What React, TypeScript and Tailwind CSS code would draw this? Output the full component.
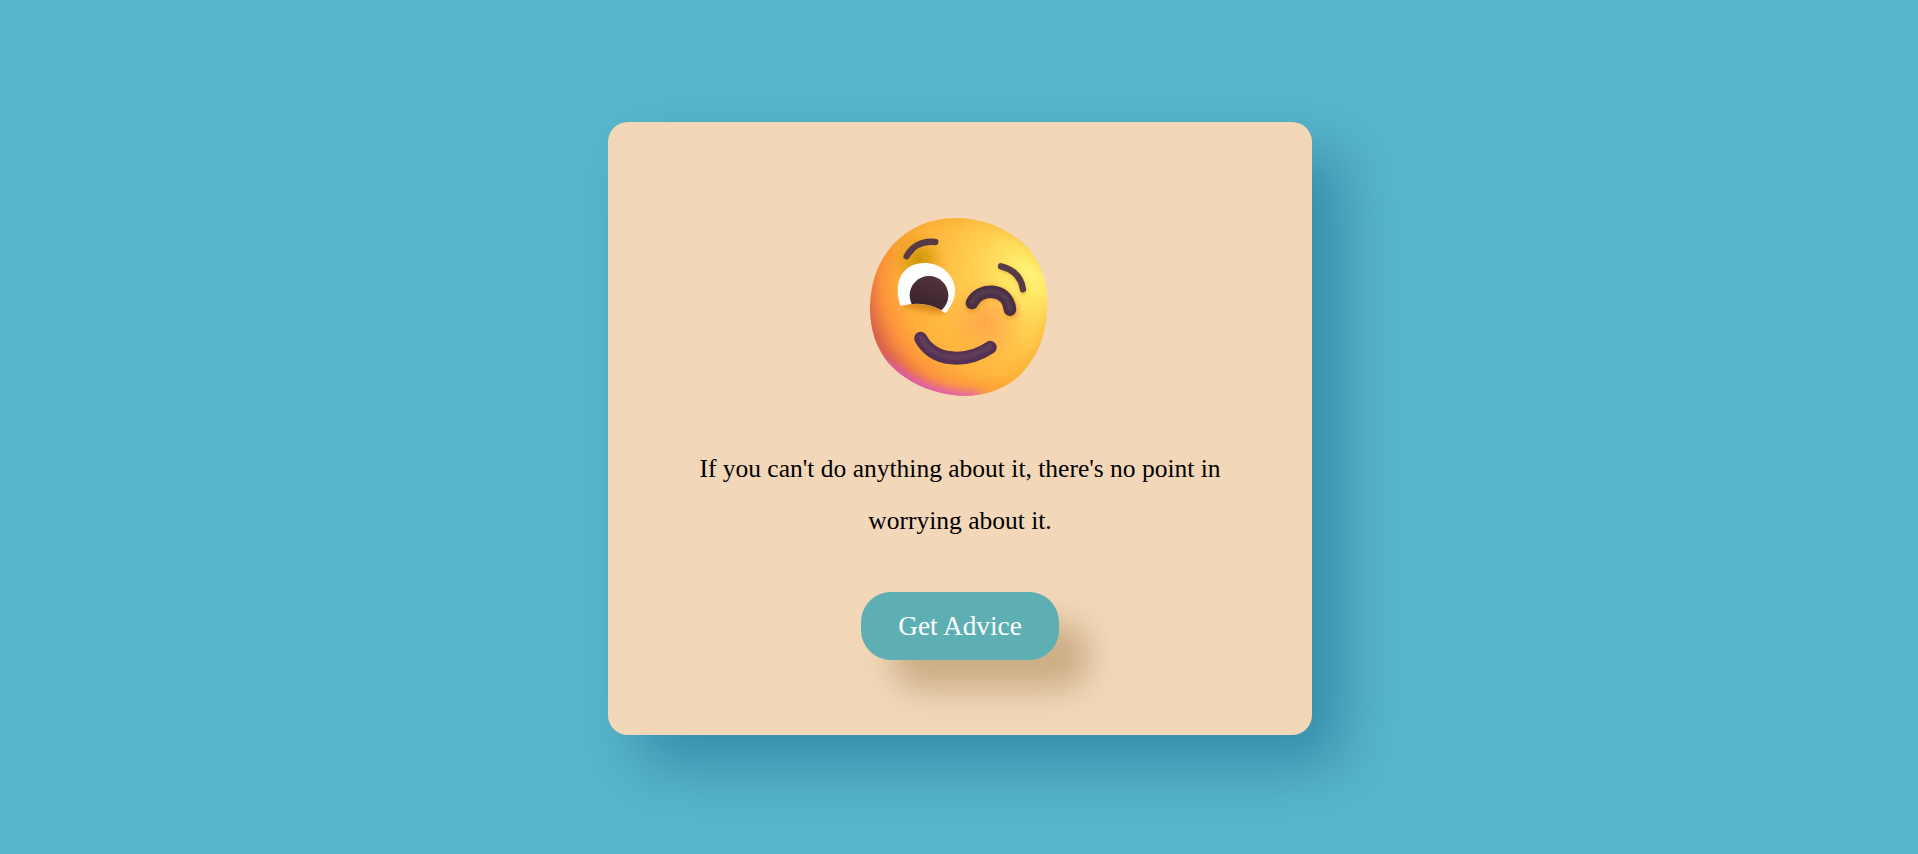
function WinkFace() {
  return (
    <svg viewBox="0 0 660 630" className="block h-[210px] w-[220px]" role="img">
      <defs>
        <clipPath id="head">
          <path d="M315 54C400 54 480 88 530 140C573 187 592 245 592 310C592 385 572 455 522 512C477 563 412 588 340 587C250 584 168 546 115 488C77 440 60 388 60 320C63 240 86 183 130 133C176 83 240 55 315 54Z" />
        </clipPath>
        <radialGradient id="base" gradientUnits="userSpaceOnUse" cx="545" cy="220" r="480">
          <stop offset="0" stopColor="#fff377" />
          <stop offset="0.12" stopColor="#ffea69" />
          <stop offset="0.34" stopColor="#ffd153" />
          <stop offset="0.6" stopColor="#ffbb40" />
          <stop offset="1" stopColor="#ffa536" />
        </radialGradient>
        <radialGradient id="edge" gradientUnits="userSpaceOnUse" cx="460" cy="230" r="420">
          <stop offset="0.7" stopColor="#f98f3c" stopOpacity="0" />
          <stop offset="0.86" stopColor="#fb8b3d" stopOpacity="0.65" />
          <stop offset="1" stopColor="#d9624a" />
        </radialGradient>
        <radialGradient id="cheek" gradientUnits="userSpaceOnUse" cx="405" cy="365" r="125">
          <stop offset="0" stopColor="#ffa148" stopOpacity="0.85" />
          <stop offset="1" stopColor="#ffa148" stopOpacity="0" />
        </radialGradient>
        <radialGradient id="socket" gradientUnits="userSpaceOnUse" cx="205" cy="180" r="85">
          <stop offset="0" stopColor="#d29609" />
          <stop offset="0.4" stopColor="#d99c12" stopOpacity="0.75" />
          <stop offset="1" stopColor="#e9a51e" stopOpacity="0" />
        </radialGradient>
        <linearGradient id="pupil" x1="0.7" y1="0" x2="0.3" y2="1">
          <stop offset="0" stopColor="#51343b" />
          <stop offset="1" stopColor="#38202d" />
        </linearGradient>
        <linearGradient id="lid" gradientUnits="userSpaceOnUse" x1="218" y1="308" x2="210" y2="352">
          <stop offset="0" stopColor="#c98016" />
          <stop offset="0.5" stopColor="#ed9b2b" stopOpacity="0.8" />
          <stop offset="1" stopColor="#ffaa36" stopOpacity="0" />
        </linearGradient>
        <clipPath id="eye">
          <path d="M152 318C133 270 143 215 188 196C244 174 308 207 315 265C317 294 304 320 286 340C256 313 204 303 152 318Z" />
        </clipPath>
        <filter id="soft3" x="-30%" y="-30%" width="160%" height="160%"><feGaussianBlur stdDeviation="3" /></filter>
        <filter id="soft6" x="-30%" y="-60%" width="160%" height="220%"><feGaussianBlur stdDeviation="6" /></filter>
        <filter id="soft16" x="-50%" y="-50%" width="200%" height="200%"><feGaussianBlur stdDeviation="16" /></filter>
      </defs>
      <g clipPath="url(#head)">
        <rect width="660" height="630" fill="url(#base)" />
        <rect width="660" height="630" fill="url(#edge)" />
        <path d="M605 340C585 485 490 585 350 598" fill="none" stroke="#fbab32" strokeWidth="26" opacity="0.7" filter="url(#soft16)" />
        <path d="M100 180C160 80 240 50 330 50C440 50 540 110 590 210" fill="none" stroke="#ee9e20" strokeWidth="16" opacity="0.6" filter="url(#soft16)" />
        <path d="M95 495C160 558 250 604 390 603" fill="none" stroke="#df5ccc" strokeWidth="48" filter="url(#soft16)" />
        <circle cx="405" cy="365" r="125" fill="url(#cheek)" />
        <circle cx="205" cy="180" r="85" fill="url(#socket)" />
      </g>
      <path d="M152 318C204 303 256 313 286 340C263 356 180 356 152 318Z" fill="url(#lid)" filter="url(#soft3)" />
      <g clipPath="url(#eye)">
        <rect x="130" y="180" width="200" height="180" fill="#fff" />
        <circle cx="237" cy="286" r="58" fill="url(#pupil)" />
      </g>
      <path d="M158 319C204 306 242 314 272 330C250 342 190 338 158 319Z" fill="url(#lid)" />
      <g fill="none" strokeLinecap="round" strokeLinejoin="round">
        <path d="M366 316C385 266 478 258 484 337" stroke="#d87818" strokeWidth="36" opacity="0.55" filter="url(#soft6)" />
        <path d="M457 204C493 214 514 238 519 276" stroke="#d28a18" strokeWidth="16" opacity="0.6" filter="url(#soft6)" />
        <path d="M170 169C184 143 212 121 256 126" stroke="#573a43" strokeWidth="19" />
        <path d="M453 199C493 209 514 232 519 268" stroke="#573a46" strokeWidth="19" />
        <path d="M366 309C385 264 472 258 480 329" stroke="#493044" strokeWidth="38" />
        <path d="M366 307C385 262 472 256 480 327" stroke="#604456" strokeWidth="13" opacity="0.65" filter="url(#soft3)" />
        <path d="M212 415C250 485 347 492 421 442" stroke="#553055" strokeWidth="39" />
        <path d="M212 413C250 482 347 489 421 439" stroke="#65445a" strokeWidth="15" opacity="0.7" filter="url(#soft3)" />
      </g>
    </svg>
  );
}

export default function App() {
  return (
    <main className="flex h-[854px] justify-center overflow-hidden bg-[#58b6ca] pt-[122px] pr-0.5 pl-1 font-['Liberation_Serif',serif]">
      <section className="flex h-[613px] w-[704px] flex-col items-center rounded-[20px] bg-[#f2d7b9] pt-[78px] shadow-[30px_30px_60px_#348cab]">
        <WinkFace />
        <p className="mt-[33px] w-[560px] text-center text-[25.5px] leading-[52px] text-black">
          If you can't do anything about it, there's no point in worrying about it.
        </p>
        <button className="mt-[45px] h-[68px] w-[198px] rounded-[30px] bg-[#5eafb4] text-[27.3px] text-white shadow-[30px_30px_30px_#ccaf87]">
          Get Advice
        </button>
      </section>
    </main>
  );
}
